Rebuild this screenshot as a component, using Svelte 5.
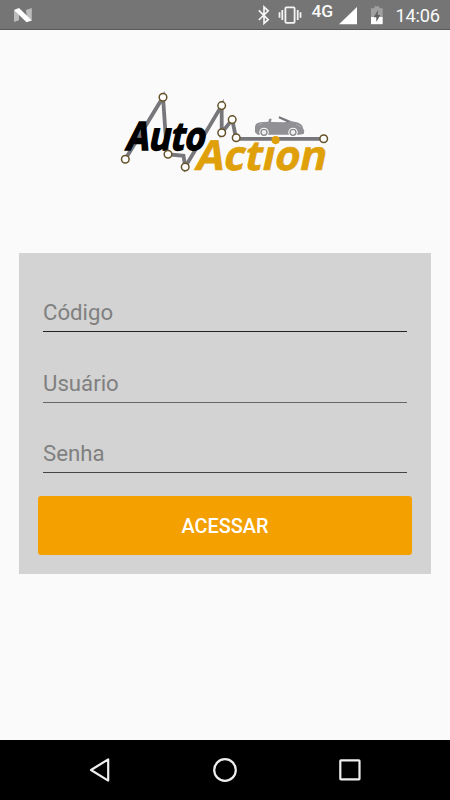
<script>
  const fields = [
    { label: 'Código', type: 'text', tone: 'dark' },
    { label: 'Usuário', type: 'text', tone: 'soft' },
    { label: 'Senha', type: 'password', tone: 'medium' }
  ];
  const nodes = [
    [125.3, 159.2], [163, 97.2], [168, 154.2], [185.2, 167], [221.7, 105.6],
    [221.7, 132.8], [232.2, 119.6], [236.2, 137.8], [323.7, 138.8]
  ];
</script>

<div class="screen">
  <header>
    <svg class="n" width="20" height="18" viewBox="0 0 20 18">
      <path fill="#bcbcbc" d="M1 3 6 5 6 13.2 1 15ZM13 3 18.8 1V13.5L14 12Z" />
      <path fill="#fff" d="M1 3 6 1 18.8 13.5 13.5 15.2Z" />
    </svg>
    <svg width="193" height="30" viewBox="257 0 193 30">
      <path d="M258.8 10.4 268.2 19.7 264 23.3V7L268.2 10.8 258.8 20" fill="none" stroke="#f5f5f5" stroke-width="1.7" />
      <g fill="none" stroke="#f5f5f5" stroke-width="1.8">
        <rect x="285.4" y="7.4" width="9.2" height="15.4" rx="1" />
        <path d="M282.3 10V20M297.7 10V20M279.5 12.3V17.7M300.5 12.3V17.7" />
      </g>
      <text x="311.4" y="17" font-size="16" font-weight="500" textLength="21.8" lengthAdjust="spacingAndGlyphs">4G</text>
      <path fill="#fff" d="M339 24.3 357 7V24.3Z" />
      <path fill="#a0a0a0" d="M371 8.2H374.5V6.3H379.3V8.2H382.7V17H371Z" />
      <path fill="#fff" d="M371 17H382.7V24.2H371Z" />
      <path fill="#606060" d="M378.3 9.8 373.6 17.2H376.3V22L380.3 14.9H377.6Z" />
      <text x="395.5" y="21.8" font-size="18.2" textLength="44.5">14:06</text>
    </svg>
  </header>

  <main>
    <svg class="logo" width="220" height="90" viewBox="115 88 220 90" role="img" aria-label="Auto Action">
      <clipPath id="below-dot"><path d="M180 130H264V146.8H284V130H340V180H180Z" /></clipPath>
      <path fill="none" stroke="#77777b" stroke-width="3.8" d="M125.3 159.2 163 97.2 167 154.2 183.5 155.8 185.2 167 221.7 105.6V132.8L232.2 119.6 236.2 138.8H323.7" />
      <text class="auto" transform="translate(125 149.6) skewX(-12)" textLength="79" lengthAdjust="spacingAndGlyphs">Auto</text>
      <g clip-path="url(#below-dot)">
        <text class="action" transform="translate(194.2 170) skewX(-12)" textLength="130.5" lengthAdjust="spacingAndGlyphs">Action</text>
      </g>
      <circle cx="275.6" cy="140.1" r="4.1" fill="#dfa009" />
      {#each nodes as [x, y]}
        <circle cx={x} cy={y} r="3.8" fill="#fff" stroke="#665329" stroke-width="1.5" />
      {/each}
      <g transform="translate(220 85) scale(.33333)">
        <path fill="#909095" d="M105 128C105 117 112 112 127 111L145 110 147 101 155 101 153 111 194 112 205 108 176 98 178 94 215 109C237 112 248 118 249 130L253 138 251 147 237 149H113L105 142Z" />
        <path stroke="#b9b9bc" stroke-width="2" fill="none" d="M116 119 128 115M229 119 244 126" />
        <path stroke="#77777b" stroke-width="6" d="M177 97 206 110" />
        <circle cx="132" cy="142" r="14" fill="#fff" />
        <circle cx="219" cy="142" r="14" fill="#fff" />
        <circle cx="132" cy="142" r="9" fill="#efeff0" stroke="#87878b" stroke-width="4" />
        <circle cx="219" cy="142" r="9" fill="#efeff0" stroke="#87878b" stroke-width="4" />
      </g>
    </svg>
    <form onsubmit={(e) => e.preventDefault()}>
      {#each fields as field}
        <input class={field.tone} type={field.type} placeholder={field.label} aria-label={field.label} />
      {/each}
      <button>ACESSAR</button>
    </form>
  </main>

  <nav>
    <svg width="24" height="28" viewBox="0 0 24 28"><path d="M19.2 3.4V24.6L2 14Z" /></svg>
    <svg width="28" height="28" viewBox="0 0 28 28"><circle cx="14" cy="14" r="10.8" /></svg>
    <svg width="28" height="28" viewBox="0 0 28 28"><rect x="4.3" y="4.4" width="19.2" height="19" rx=".7" /></svg>
  </nav>
</div>

<style>
  .screen {
    width: 450px;
    height: 800px;
    display: flex;
    flex-direction: column;
    background: #fafafa;
    font-family: Roboto, sans-serif;
    overflow: hidden;
  }
  header {
    height: 30px;
    box-sizing: border-box;
    display: flex;
    justify-content: space-between;
    background: #757575;
    border-bottom: 1px solid #5c585a;
  }
  header text { fill: #fafafa; }
  .n { margin: 7px 0 0 13px; }
  main {
    flex: 1;
    display: flex;
    flex-direction: column;
    align-items: center;
  }
  .logo { margin-top: 58px; flex: none; overflow: visible; }
  .logo text {
    font-family: "Open Sans", sans-serif;
    font-weight: 700;
    text-rendering: geometricPrecision;
  }
  .logo .auto { font-size: 39px; fill: #000; stroke: #000; stroke-width: 1.5; }
  .logo .action { font-size: 41px; fill: #dfa009; stroke: #dfa009; stroke-width: .7; }
  form {
    width: 412px;
    height: 321px;
    margin-top: 75px;
    padding: 38px 19px 0;
    box-sizing: border-box;
    display: flex;
    flex-direction: column;
    background: #d3d3d3;
  }
  input {
    height: 41px;
    margin: 0 5px 29.5px;
    padding: 2px 0 0;
    box-sizing: border-box;
    border: 0;
    border-bottom: 1px solid #222;
    border-radius: 0;
    outline: 0;
    background: none;
    font: 22.2px Roboto, sans-serif;
    color: #222;
  }
  .soft { border-color: #666; }
  .medium { border-color: #444; margin-bottom: 22.5px; }
  input::placeholder { color: #808080; opacity: 1; }
  button {
    height: 59.5px;
    flex: none;
    padding: 2px 0 0;
    border: 0;
    border-radius: 3px;
    background: #f3a000;
    color: #fff;
    font: 500 19.9px Roboto, sans-serif;
  }
  nav {
    height: 60px;
    display: flex;
    align-items: center;
    justify-content: space-between;
    padding: 0 86px 0 89px;
    background: #000;
  }
  nav svg { fill: none; stroke: #eee; stroke-width: 2.2; stroke-linejoin: round; }
</style>
